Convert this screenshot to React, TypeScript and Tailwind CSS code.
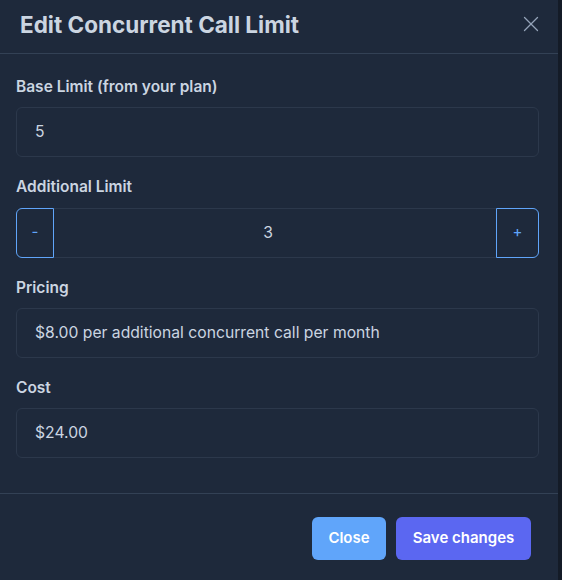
import { useState } from "react";
import { X } from "lucide-react";

const PRICE = 8;
const BASE = 5;

const fieldCls =
  "flex h-[50px] items-center rounded-md border border-[#2c384b] bg-[#1e293b] px-[18px] text-[15.7px] text-[#cbd5e1]";
const labelCls = "mb-[9px] block text-[15.5px] font-semibold text-[#cbd5e1]";

export default function App() {
  const [extra, setExtra] = useState(3);

  return (
    <div className="flex h-[580px] w-[562px] bg-[#141b27] font-['Inter',sans-serif]">
      <div className="flex h-full w-[558px] flex-col bg-[#1e293b]">
        {/* header */}
        <div className="flex h-[54px] shrink-0 items-start justify-between border-b border-[#334155] pl-[20px] pr-[14px]">
          <h1 className="pt-[9px] text-[22.5px] font-bold leading-[32px] text-[#cbd5e1]">Edit Concurrent Call Limit</h1>
          <button type="button" className="mt-[11px] text-[#94a3b8]" aria-label="Close">
            <X size={26} strokeWidth={1.2} />
          </button>
        </div>

        {/* body */}
        <div className="flex flex-col px-[16px] pr-[19px] pt-[21px]">
          <label className={labelCls}>Base Limit (from your plan)</label>
          <div className={fieldCls}>{BASE}</div>

          <label className={`${labelCls} mt-[18px]`}>Additional Limit</label>
          <div className="flex h-[50px] items-stretch">
            <button
              type="button"
              onClick={() => setExtra(Math.max(0, extra - 1))}
              className="w-[38px] rounded-l-md border border-[#60a5fa] text-[15px] text-[#60a5fa]"
            >
              -
            </button>
            <div className="flex flex-1 items-center justify-center border-y border-[#2c384b] pr-[14px] text-[15.7px] text-[#cbd5e1]">
              {extra}
            </div>
            <button
              type="button"
              onClick={() => setExtra(extra + 1)}
              className="w-[43px] rounded-r-md border border-[#60a5fa] text-[15px] text-[#60a5fa]"
            >
              +
            </button>
          </div>

          <label className={`${labelCls} mt-[18px]`}>Pricing</label>
          <div className={fieldCls}>${PRICE.toFixed(2)} per additional concurrent call per month</div>

          <label className={`${labelCls} mt-[18px]`}>Cost</label>
          <div className={fieldCls}>${(PRICE * extra).toFixed(2)}</div>
        </div>

        {/* footer */}
        <div className="mt-[35px] flex justify-end gap-[10px] border-t border-[#334155] pr-[27px] pt-[23px]">
          <button type="button" className="h-[43px] w-[74px] rounded-md bg-[#60a5fa] text-[15px] font-semibold text-white">
            Close
          </button>
          <button type="button" className="h-[43px] w-[135px] rounded-md bg-[#5b67f1] text-[15px] font-semibold text-white">
            Save changes
          </button>
        </div>
      </div>
    </div>
  );
}
